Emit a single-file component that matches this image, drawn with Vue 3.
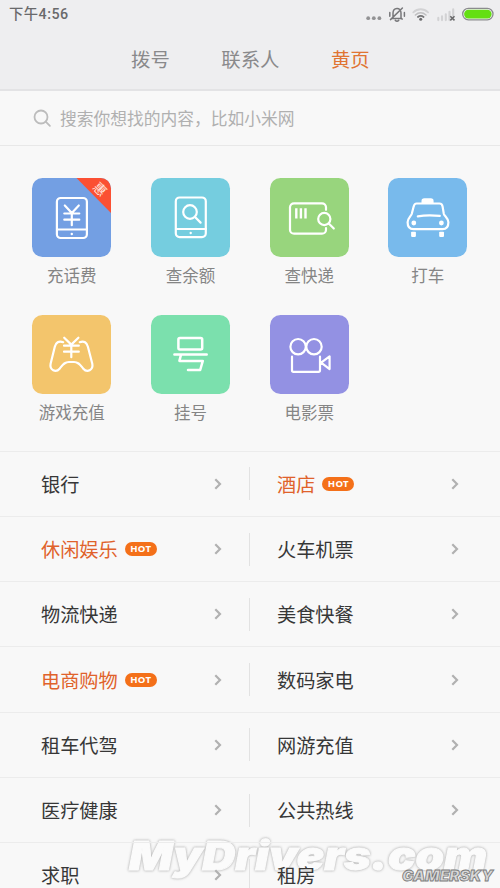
<script setup>
const tabs = [
  { label: '拨号', active: false },
  { label: '联系人', active: false },
  { label: '黄页', active: true },
]

const services = [
  { id: 'recharge', label: '充话费', color: '#739fe3', badge: '惠' },
  { id: 'balance', label: '查余额', color: '#75cddf' },
  { id: 'express', label: '查快递', color: '#98d57d' },
  { id: 'taxi', label: '打车', color: '#78baec' },
  { id: 'game', label: '游戏充值', color: '#f3c56c' },
  { id: 'register', label: '挂号', color: '#7be0ad' },
  { id: 'movie', label: '电影票', color: '#9391e3' },
]

const rows = [
  [{ name: '银行' }, { name: '酒店', hot: true }],
  [{ name: '休闲娱乐', hot: true }, { name: '火车机票' }],
  [{ name: '物流快递' }, { name: '美食快餐' }],
  [{ name: '电商购物', hot: true }, { name: '数码家电' }],
  [{ name: '租车代驾' }, { name: '网游充值' }],
  [{ name: '医疗健康' }, { name: '公共热线' }],
  [{ name: '求职' }, { name: '租房' }],
]
</script>

<template>
  <main class="screen">
    <header class="header">
      <div class="status">
        <span class="time">下午4:56</span>
        <svg class="status-icons" width="132" height="20" viewBox="0 0 132 20">
          <g fill="#929294">
            <circle cx="2.2" cy="14.2" r="1.9" /><circle cx="7.8" cy="14.2" r="1.9" /><circle cx="13.4" cy="14.2" r="1.9" />
          </g>
          <g fill="none" stroke="#77777a" stroke-width="1.5" stroke-linecap="round">
            <path d="M25.8 14.5h9.8M27 14V9.2c0-6 8-6.4 8-.3v5.2l1.2 1M24.5 15.6 36.4 4M23.8 8.6v3.6M38.4 8.6v3.6M29.3 16.4c1 1 2.4 1 3.4 0" />
          </g>
          <g fill="none" stroke-linecap="round">
            <path d="M47.3 8.3c4.4-4.1 10.4-4.1 14.8 0" stroke="#d2d2d4" stroke-width="1.8" />
            <path d="M49.4 11c3.2-2.8 7.4-2.8 10.6 0" stroke="#bfbfc1" stroke-width="1.6" />
            <path d="M51.9 13c1.8-1.5 3.9-1.5 5.7 0" stroke="#757577" stroke-width="1.7" />
          </g>
          <circle cx="54.7" cy="15.3" r="1.5" fill="#6b6b6d" />
          <path d="M72.3 16.1v-2.2M76 16.1v-3.8M79.8 16.1v-5.8M83.5 16.1V7.8M87.2 12V5.2" stroke="#d2d2d4" stroke-width="2.1" stroke-linecap="round" />
          <path d="m84.3 12.2 4.2 4.2m0-4.2-4.2 4.2" stroke="#69696b" stroke-width="1.5" />
          <rect x="96.7" y="4.4" width="30.3" height="11.4" rx="5.7" fill="#f2f2f3" stroke="#8b8b8e" stroke-width="1.3" />
          <rect x="98.1" y="5.8" width="27.5" height="8.6" rx="4.3" fill="#64df12" />
        </svg>
      </div>
      <nav class="tabs">
        <span v-for="tab in tabs" :key="tab.label" :class="{ active: tab.active }">{{ tab.label }}</span>
      </nav>
    </header>

    <div class="search">
      <svg width="19" height="19" viewBox="0 0 19 19" fill="none" stroke="#bcbcbc" stroke-width="1.8" stroke-linecap="round">
        <circle cx="8" cy="8" r="6.5" /><path d="m12.7 12.7 4.2 4.2" />
      </svg>
      <span>搜索你想找的内容，比如小米网</span>
    </div>

    <section class="services">
      <div v-for="item in services" :key="item.id" class="service">
        <div class="tile" :style="{ backgroundColor: item.color }">
          <svg class="glyph" viewBox="0 0 79 79">
            <template v-if="item.id === 'recharge'">
              <rect x="24.9" y="20" width="30" height="40" rx="3.8" />
              <path d="M25 51.5h30M32.8 27.5l7 7.4 7-7.4M32.3 35.5h15M32.3 41.7h15M39.8 35v12.2" />
              <circle class="solid" cx="39.8" cy="56" r="1.2" />
            </template>
            <template v-else-if="item.id === 'balance'">
              <rect x="24.8" y="19.5" width="30" height="39.6" rx="3.8" />
              <path d="M25 51h30M44 39l5.6 5.6" />
              <circle cx="39" cy="34" r="6.8" />
              <circle class="solid" cx="39.7" cy="55" r="1.2" />
            </template>
            <template v-else-if="item.id === 'express'">
              <path d="M56 31.8v-2.5a4 4 0 0 0-4-4H24a4 4 0 0 0-4 4v22.4a4 4 0 0 0 4 4h28a4 4 0 0 0 4-4v-1.5" />
              <path class="flat" d="M26.3 30.2v10.2M30.9 30.2v10.2M35.5 30.2v10.2" />
              <circle cx="54.3" cy="41" r="6.1" />
              <path d="m58.8 45.5 5 5" />
            </template>
            <template v-else-if="item.id === 'taxi'">
              <path d="M28.5 25.5h23c2.1 0 2.8 1.3 3.1 3.2l1.2 7.1c.5 2.3 4.6 4.4 4.6 8.5 0 4.5-2.2 6.9-5.9 6.9h-29c-3.7 0-5.9-2.4-5.9-6.9 0-4.1 3.5-6.2 4.2-8.5l1.8-7.1c.5-1.9 1-3.2 2.9-3.2ZM29.8 38.3c7-1.1 14-1.1 22-.4" />
              <path class="solid" d="M33.5 25v-2c0-1.9.9-2.8 2.8-2.8h6.5c1.9 0 2.8.9 2.8 2.8v2Z" />
              <circle class="solid" cx="25.8" cy="45" r="2.4" /><circle class="solid" cx="53.4" cy="45" r="2.4" />
              <rect class="solid" x="23.1" y="53.7" width="4.8" height="5.2" rx=".8" />
              <rect class="solid" x="51.2" y="53.7" width="4.8" height="5.2" rx=".8" />
            </template>
            <template v-else-if="item.id === 'game'">
              <path d="M31.2 27.2c-4.5-1.8-7.4.4-8.4 4.5l-4.2 17.1c-1.2 6.3 5.2 9.3 9 4.9 3.2-3.8 4.6-6.7 9.3-6.7H42c4.7 0 6.1 2.9 9.3 6.7 3.8 4.4 10.2 1.4 9-4.9l-4.4-17.1c-1-4.1-3.9-6.3-8.2-4.5" />
              <path d="m32.2 22.7 7.1 6.9 7.1-6.9M32 30.7h14.8M32 36.7h14.8M39.3 29.8v12.4" />
            </template>
            <template v-else-if="item.id === 'register'">
              <g stroke-width="2.5">
                <rect x="27.4" y="23" width="23.8" height="11.4" rx="1.5" />
                <path d="M23.4 39.5h32.3M30 39.8l-1.6 6.1h23.4L49.2 55H37" />
              </g>
            </template>
            <template v-else>
              <circle cx="28.1" cy="31.7" r="7.7" /><circle cx="44" cy="31.7" r="7.7" />
              <path d="M22 41.7v13.6c0 1 .5 1.5 1.5 1.5h25c1 0 1.5-.5 1.5-1.5V41.7M51.1 47.6l8.5-6.3v12.8Z" />
            </template>
          </svg>
          <svg v-if="item.badge" class="ribbon" viewBox="0 0 79 79">
            <path d="M44.5 0H79v35Z" fill="#fb5033" />
            <text x="68" y="16" text-anchor="middle" transform="rotate(45 68 11.3)">{{ item.badge }}</text>
          </svg>
        </div>
        <span class="service-label">{{ item.label }}</span>
      </div>
    </section>

    <section class="categories">
      <div v-for="(row, index) in rows" :key="index" class="row">
        <div v-for="item in row" :key="item.name" class="cell">
          <span class="name" :class="{ featured: item.hot }">{{ item.name }}</span>
          <span v-if="item.hot" class="hot">HOT</span>
          <svg class="chevron" width="8" height="12" viewBox="0 0 8 12"><path d="m1.3 1.2 4.7 4.8-4.7 4.8" /></svg>
        </div>
      </div>
    </section>

    <svg class="site-mark" width="380" height="54" viewBox="0 0 380 54">
      <text x="9" y="35.5" textLength="358" lengthAdjust="spacingAndGlyphs">MyDrivers.com</text>
    </svg>
    <svg class="source-mark" width="100" height="24" viewBox="0 0 100 24">
      <text x="3" y="17" textLength="91" lengthAdjust="spacingAndGlyphs">GAMERSKY</text>
    </svg>
  </main>
</template>

<style>
body {
  background: #f8f8f8;
  overflow: hidden;
}
</style>

<style scoped>
.screen {
  position: relative;
  z-index: 0;
  width: 500px;
  height: 888px;
  overflow: hidden;
  background: #f8f8f8;
  font-family: 'Noto Sans CJK SC', sans-serif;
}
.header {
  box-sizing: border-box;
  height: 91px;
  background: #eeeef0;
  border-bottom: 2px solid #e3e3e5;
}
.status {
  display: flex;
  justify-content: space-between;
  height: 28px;
  padding: 4px 2px 0 9px;
  box-sizing: border-box;
}
.time {
  color: #69696b;
  font: 500 14.3px/20px Roboto, 'Noto Sans CJK SC', sans-serif;
  letter-spacing: .5px;
}
.status-icons {
  display: block;
}
.tabs {
  display: flex;
  gap: 51.5px;
  padding-left: 131px;
  color: #89898b;
  font-size: 19.4px;
  line-height: 62px;
}
.active {
  color: #e07432;
}
.search {
  display: flex;
  box-sizing: border-box;
  height: 55px;
  align-items: center;
  gap: 8px;
  padding-left: 33px;
  border-bottom: 1px solid #e8e8e8;
  color: #b0b0b0;
  font-size: 16.75px;
}
.services {
  display: grid;
  grid-template-columns: repeat(4, 79px);
  grid-auto-rows: 137.4px;
  column-gap: 39.7px;
  box-sizing: border-box;
  height: 304.7px;
  padding: 32px 0 0 32.3px;
}
.service {
  display: flex;
  flex-direction: column;
  align-items: center;
}
.tile {
  position: relative;
  width: 79px;
  height: 79px;
  flex-shrink: 0;
  border-radius: 10.5px;
  overflow: hidden;
}
.glyph {
  display: block;
  width: 79px;
  height: 79px;
  fill: none;
  stroke: #fff;
  stroke-width: 2.2;
  stroke-linejoin: round;
  stroke-linecap: round;
}
.solid {
  fill: #fff;
  stroke: none;
}
.flat {
  stroke-linecap: butt;
  stroke-width: 2.4;
}
.ribbon {
  position: absolute;
  inset: 0;
}
.ribbon text {
  fill: #ffe4dc;
  font-size: 13px;
}
.service-label {
  margin-top: 6px;
  color: #858585;
  font-size: 16.5px;
  line-height: 24px;
  white-space: nowrap;
}
.row {
  display: grid;
  grid-template-columns: 250px 250px;
  box-sizing: border-box;
  height: 65.25px;
  border-top: 1px solid #ececec;
}
.cell {
  display: flex;
  align-items: center;
  box-sizing: border-box;
  padding: 0 28px 0 41px;
}
.cell + .cell {
  height: 33px;
  align-self: center;
  margin-left: -1px;
  padding: 0 41px 0 27px;
  border-left: 1px solid #e2e2e2;
}
.name {
  color: #373737;
  font-size: 19.2px;
  line-height: 28px;
}
.featured {
  color: #e0622b;
}
.hot {
  width: 32px;
  margin-left: 7px;
  border-radius: 8px;
  background: #f47019;
  color: #fff;
  font: 700 9.6px/14px 'Noto Sans', sans-serif;
  letter-spacing: .3px;
  text-align: center;
}
.chevron {
  margin-left: auto;
  fill: none;
  stroke: #b1b1b1;
  stroke-width: 2.2;
}
.site-mark {
  position: absolute;
  z-index: -1;
  left: 120px;
  top: 834px;
}
.site-mark text {
  fill: #fbfbfb;
  stroke: #fbfbfb;
  stroke-width: 1;
  stroke-linejoin: round;
  font: italic 900 40px Inter, sans-serif;
  filter: drop-shadow(0 0 .8px #b8b8b8) drop-shadow(.5px .5px 1px #d8d8d8);
}
.source-mark {
  position: absolute;
  left: 399px;
  top: 864px;
}
.source-mark text {
  fill: #d8d8d8;
  stroke: #7b7b7b;
  stroke-width: .8;
  font: italic 900 14px Inter, sans-serif;
}
</style>
